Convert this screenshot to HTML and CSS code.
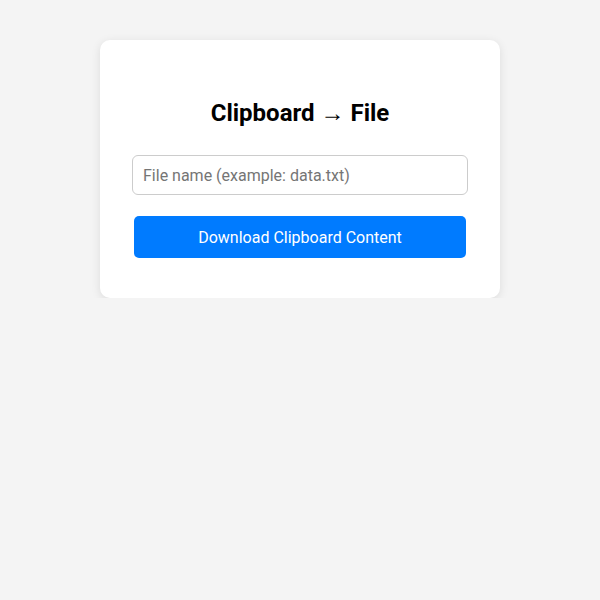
FILE: index.html
```html
<!DOCTYPE html>
<html>
<head>
<meta charset="utf-8">
<link rel="stylesheet" href="styles.css">
</head>
<body>
<div class="card">
  <h2 class="title">Clipboard → File</h2>
  <input class="name-input" type="text" placeholder="File name (example: data.txt)">
  <button class="download-btn">Download Clipboard Content</button>
</div>
</body>
</html>
```
FILE: styles.css
```css
html, body {
  margin: 0;
  padding: 0;
  background: #f4f4f4;
  font-family: Roboto, "Liberation Sans", sans-serif;
}
.card {
  width: 400px;
  box-sizing: border-box;
  margin: 40px auto 0;
  padding: 32px 32px 40px;
  background: #fff;
  border-radius: 10px;
  box-shadow: 0 2px 10px rgba(0, 0, 0, 0.1);
}
.title {
  margin: 27px 0 28px;
  font-size: 24px;
  font-weight: 700;
  line-height: 28px;
  text-align: center;
  color: #000;
}
.name-input {
  display: block;
  width: 100%;
  box-sizing: border-box;
  height: 40px;
  padding: 0 10px;
  border: 1px solid #ccc;
  border-radius: 6px;
  font-family: Roboto, "Liberation Sans", sans-serif;
  font-size: 16px;
  color: #000;
  outline: none;
}
.name-input::placeholder {
  color: #757575;
}
.download-btn {
  display: block;
  width: calc(100% - 4px);
  margin: 21px 2px 0;
  height: 42px;
  border: none;
  border-radius: 5px;
  background: #007bff;
  color: #fff;
  font-family: Roboto, "Liberation Sans", sans-serif;
  font-size: 16px;
  cursor: pointer;
}
```
